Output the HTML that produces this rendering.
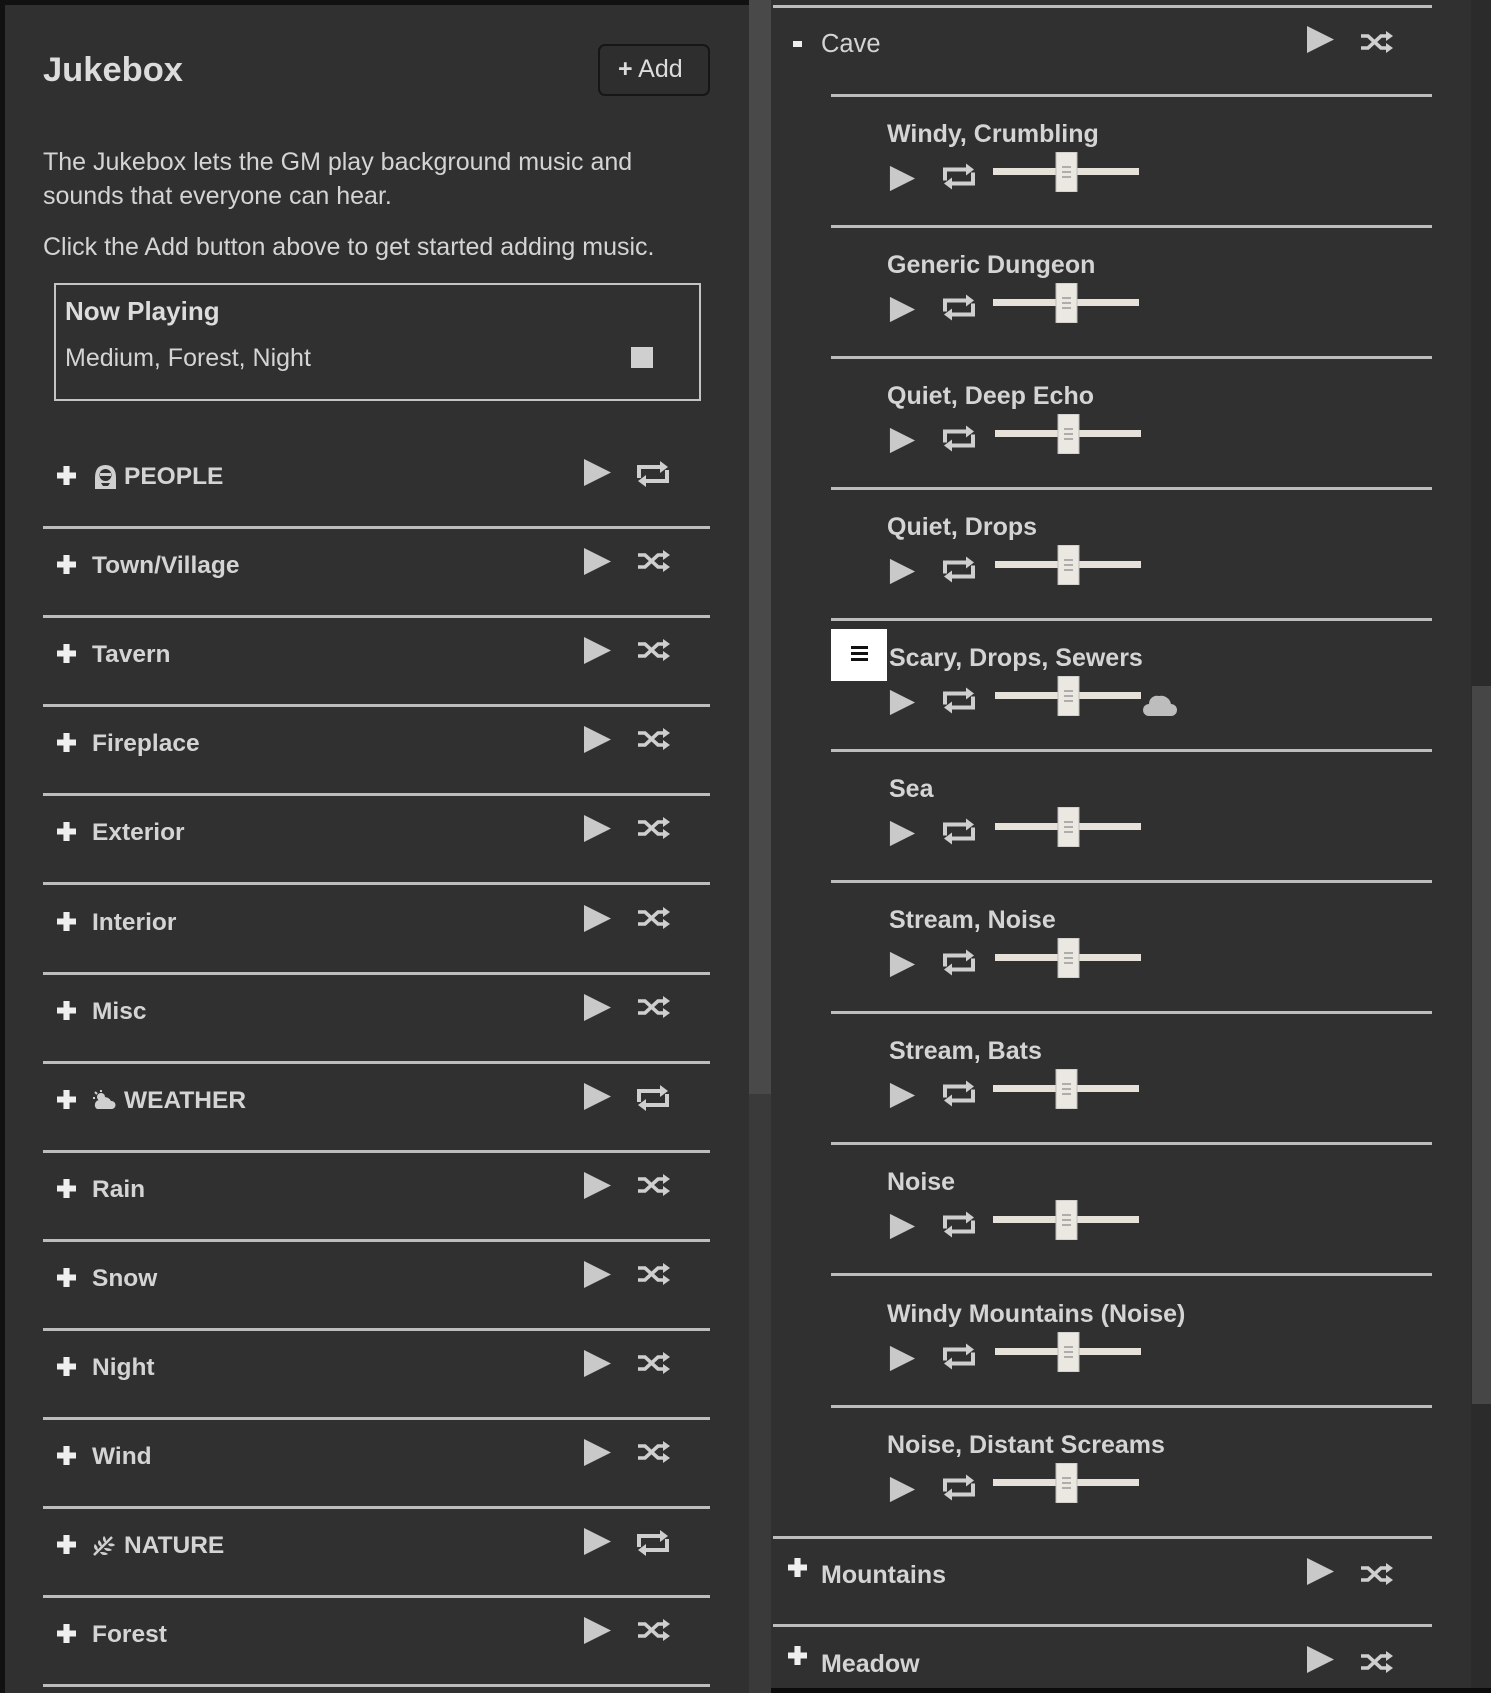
<!DOCTYPE html>
<html><head><meta charset="utf-8">
<style>
*{margin:0;padding:0;box-sizing:border-box}
body{width:1491px;height:1693px;background:#111;position:relative;overflow:hidden;font-family:"Liberation Sans",Arial,sans-serif;color:#d4d4d4}
.a{position:absolute}
.lp{left:5px;top:5px;width:744px;height:1688px;background:#303030}
.ls{left:749px;top:0;width:22px;height:1693px;background:#3a3a3a}
.lt{left:749px;top:0;width:22px;height:1094px;background:#494949}
.rp{left:771px;top:0;width:700px;height:1688px;background:#303030}
.rs{left:1471px;top:0;width:20px;height:1693px;background:#2b2b2b}
.rt{left:1472px;top:686px;width:19px;height:718px;background:#464646}
.sep{height:3px;background:#bdbdbd}
.lab{font-size:24.5px;font-weight:bold;line-height:30px;white-space:nowrap}
.rl{font-size:25px}
svg.i{position:absolute;overflow:visible}
.L{position:absolute;left:0}
</style></head><body>
<svg width="0" height="0" style="position:absolute">
<defs>
<symbol id="pl" viewBox="0 0 29 27"><polygon points="1,0 28,13.5 1,27" fill="#c9c9c9"/></symbol>
<symbol id="sh" viewBox="0 0 34 22"><g fill="none" stroke="#cfcfcf" stroke-width="3.6"><path d="M1 5h7l13 12h6"/><path d="M1 17h7l13-12h6"/></g><polygon points="26,0 33,5 26,10" fill="#cfcfcf"/><polygon points="26,12 33,17 26,22" fill="#cfcfcf"/></symbol>
<symbol id="rp" viewBox="0 0 36 30"><g fill="none" stroke="#cfcfcf" stroke-width="4"><path d="M4 19V8h22"/><path d="M32 11v11H10"/></g><polygon points="25,2 33,8 25,14" fill="#cfcfcf"/><polygon points="11,16 3,22 11,28" fill="#cfcfcf"/></symbol>
<symbol id="pz" viewBox="0 0 14 14"><path d="M7 0v14M0 7h14" stroke="#efefef" stroke-width="4.5"/></symbol>
<symbol id="sl" viewBox="0 0 146 40"><rect x="0" y="16" width="146" height="7" fill="#e6e2da"/><rect x="63" y="0" width="21" height="40" fill="#ebe8e2" stroke="#bbb" stroke-width="1"/><path d="M69 15h9M69 20h9M69 25h9" stroke="#999" stroke-width="1.5"/></symbol>
</defs></svg>

<div class="a lp"></div>
<div class="a ls"></div><div class="a lt"></div>
<div class="a rp"></div>
<div class="a rs"></div><div class="a rt"></div>

<div class="a" style="left:43px;top:51px;font-size:34.5px;font-weight:bold;color:#dcdcdc">Jukebox</div>
<div class="a" style="left:598px;top:44px;width:112px;height:52px;border:2px solid #161616;border-radius:7px;background:#2e2e2e;font-size:25px;line-height:46px;color:#dcdcdc;padding-left:18px"><span style="font-weight:bold">+</span> Add</div>
<div class="a" style="left:43px;top:145px;font-size:25px;line-height:34px;width:690px">The Jukebox lets the GM play background music and<br>sounds that everyone can hear.</div>
<div class="a" style="left:43px;top:232px;font-size:25px;line-height:30px">Click the Add button above to get started adding music.</div>
<div class="a" style="left:54px;top:283px;width:647px;height:118px;border:2px solid #c4c4c4"></div>
<div class="a" style="left:65px;top:296px;font-size:26px;font-weight:bold;color:#dcdcdc">Now Playing</div>
<div class="a" style="left:65px;top:344px;font-size:25px">Medium, Forest, Night</div>
<div class="a" style="left:631px;top:347px;width:22px;height:21px;background:#cfcfcf"></div>

<div class="L" style="top:2px">
<svg class="i" style="left:57px;top:464px" width="19" height="19"><use href="#pz"/></svg>
<svg class="i" style="left:92px;top:461px" width="27" height="26" viewBox="0 0 27 26"><path d="M3 26V15Q3 2 13.5 2T24 15v11z" fill="#cfcfcf"/><circle cx="13.5" cy="12" r="6" fill="#303030"/><rect x="8" y="10" width="11" height="3" fill="#cfcfcf"/><path d="M9 20h9l-2 3h-5z" fill="#303030"/></svg>
<div class="a lab" style="left:124px;top:460px">PEOPLE</div>
<svg class="i" style="left:583px;top:457px" width="29" height="27"><use href="#pl"/></svg>
<svg class="i" style="left:635px;top:457px" width="36" height="30"><use href="#rp"/></svg>
<div class="a sep" style="left:43px;top:524px;width:667px"></div>
</div>
<div class="L" style="top:91px">
<svg class="i" style="left:57px;top:464px" width="19" height="19"><use href="#pz"/></svg>
<div class="a lab" style="left:92px;top:460px">Town/Village</div>
<svg class="i" style="left:583px;top:457px" width="29" height="27"><use href="#pl"/></svg>
<svg class="i" style="left:637px;top:459px" width="34" height="22"><use href="#sh"/></svg>
<div class="a sep" style="left:43px;top:524px;width:667px"></div>
</div>
<div class="L" style="top:180px">
<svg class="i" style="left:57px;top:464px" width="19" height="19"><use href="#pz"/></svg>
<div class="a lab" style="left:92px;top:460px">Tavern</div>
<svg class="i" style="left:583px;top:457px" width="29" height="27"><use href="#pl"/></svg>
<svg class="i" style="left:637px;top:459px" width="34" height="22"><use href="#sh"/></svg>
<div class="a sep" style="left:43px;top:524px;width:667px"></div>
</div>
<div class="L" style="top:269px">
<svg class="i" style="left:57px;top:464px" width="19" height="19"><use href="#pz"/></svg>
<div class="a lab" style="left:92px;top:460px">Fireplace</div>
<svg class="i" style="left:583px;top:457px" width="29" height="27"><use href="#pl"/></svg>
<svg class="i" style="left:637px;top:459px" width="34" height="22"><use href="#sh"/></svg>
<div class="a sep" style="left:43px;top:524px;width:667px"></div>
</div>
<div class="L" style="top:358px">
<svg class="i" style="left:57px;top:464px" width="19" height="19"><use href="#pz"/></svg>
<div class="a lab" style="left:92px;top:460px">Exterior</div>
<svg class="i" style="left:583px;top:457px" width="29" height="27"><use href="#pl"/></svg>
<svg class="i" style="left:637px;top:459px" width="34" height="22"><use href="#sh"/></svg>
<div class="a sep" style="left:43px;top:524px;width:667px"></div>
</div>
<div class="L" style="top:448px">
<svg class="i" style="left:57px;top:464px" width="19" height="19"><use href="#pz"/></svg>
<div class="a lab" style="left:92px;top:460px">Interior</div>
<svg class="i" style="left:583px;top:457px" width="29" height="27"><use href="#pl"/></svg>
<svg class="i" style="left:637px;top:459px" width="34" height="22"><use href="#sh"/></svg>
<div class="a sep" style="left:43px;top:524px;width:667px"></div>
</div>
<div class="L" style="top:537px">
<svg class="i" style="left:57px;top:464px" width="19" height="19"><use href="#pz"/></svg>
<div class="a lab" style="left:92px;top:460px">Misc</div>
<svg class="i" style="left:583px;top:457px" width="29" height="27"><use href="#pl"/></svg>
<svg class="i" style="left:637px;top:459px" width="34" height="22"><use href="#sh"/></svg>
<div class="a sep" style="left:43px;top:524px;width:667px"></div>
</div>
<div class="L" style="top:626px">
<svg class="i" style="left:57px;top:464px" width="19" height="19"><use href="#pz"/></svg>
<svg class="i" style="left:92px;top:464px" width="26" height="20" viewBox="0 0 26 20"><circle cx="9" cy="7" r="4" fill="#cfcfcf"/><path d="M9 0v2M3 2l2 2M1 8h2" stroke="#cfcfcf" stroke-width="2"/><path d="M5 19a5 5 0 0 1 2-9a7 7 0 0 1 12 1a4 4 0 0 1 1 8z" fill="#cfcfcf"/></svg>
<div class="a lab" style="left:124px;top:460px">WEATHER</div>
<svg class="i" style="left:583px;top:457px" width="29" height="27"><use href="#pl"/></svg>
<svg class="i" style="left:635px;top:457px" width="36" height="30"><use href="#rp"/></svg>
<div class="a sep" style="left:43px;top:524px;width:667px"></div>
</div>
<div class="L" style="top:715px">
<svg class="i" style="left:57px;top:464px" width="19" height="19"><use href="#pz"/></svg>
<div class="a lab" style="left:92px;top:460px">Rain</div>
<svg class="i" style="left:583px;top:457px" width="29" height="27"><use href="#pl"/></svg>
<svg class="i" style="left:637px;top:459px" width="34" height="22"><use href="#sh"/></svg>
<div class="a sep" style="left:43px;top:524px;width:667px"></div>
</div>
<div class="L" style="top:804px">
<svg class="i" style="left:57px;top:464px" width="19" height="19"><use href="#pz"/></svg>
<div class="a lab" style="left:92px;top:460px">Snow</div>
<svg class="i" style="left:583px;top:457px" width="29" height="27"><use href="#pl"/></svg>
<svg class="i" style="left:637px;top:459px" width="34" height="22"><use href="#sh"/></svg>
<div class="a sep" style="left:43px;top:524px;width:667px"></div>
</div>
<div class="L" style="top:893px">
<svg class="i" style="left:57px;top:464px" width="19" height="19"><use href="#pz"/></svg>
<div class="a lab" style="left:92px;top:460px">Night</div>
<svg class="i" style="left:583px;top:457px" width="29" height="27"><use href="#pl"/></svg>
<svg class="i" style="left:637px;top:459px" width="34" height="22"><use href="#sh"/></svg>
<div class="a sep" style="left:43px;top:524px;width:667px"></div>
</div>
<div class="L" style="top:982px">
<svg class="i" style="left:57px;top:464px" width="19" height="19"><use href="#pz"/></svg>
<div class="a lab" style="left:92px;top:460px">Wind</div>
<svg class="i" style="left:583px;top:457px" width="29" height="27"><use href="#pl"/></svg>
<svg class="i" style="left:637px;top:459px" width="34" height="22"><use href="#sh"/></svg>
<div class="a sep" style="left:43px;top:524px;width:667px"></div>
</div>
<div class="L" style="top:1071px">
<svg class="i" style="left:57px;top:464px" width="19" height="19"><use href="#pz"/></svg>
<svg class="i" style="left:92px;top:463px" width="24" height="22" viewBox="0 0 24 22"><path d="M2 21L20 3" stroke="#cfcfcf" stroke-width="2.5"/><path d="M6 17c-4-1-5-5-3-7 2 2 3 4 3 7zM10 13c-4-1-5-5-3-7 2 2 3 4 3 7zM14 9c-3-1-4-5-2-7 2 2 2 4 2 7zM8 18c1 3 5 4 8 2-2-2-5-2-8-2zM12 14c1 3 5 4 8 2-2-2-5-2-8-2zM16 10c1 3 5 3 7 1-2-2-4-2-7-1z" fill="#cfcfcf"/></svg>
<div class="a lab" style="left:124px;top:460px">NATURE</div>
<svg class="i" style="left:583px;top:457px" width="29" height="27"><use href="#pl"/></svg>
<svg class="i" style="left:635px;top:457px" width="36" height="30"><use href="#rp"/></svg>
<div class="a sep" style="left:43px;top:524px;width:667px"></div>
</div>
<div class="L" style="top:1160px">
<svg class="i" style="left:57px;top:464px" width="19" height="19"><use href="#pz"/></svg>
<div class="a lab" style="left:92px;top:460px">Forest</div>
<svg class="i" style="left:583px;top:457px" width="29" height="27"><use href="#pl"/></svg>
<svg class="i" style="left:637px;top:459px" width="34" height="22"><use href="#sh"/></svg>
<div class="a sep" style="left:43px;top:524px;width:667px"></div>
</div>

<!-- right panel -->
<div class="a sep" style="left:773px;top:5px;width:659px"></div>
<div class="a" style="left:793px;top:41px;width:9px;height:6px;background:#eee"></div>
<div class="a lab" style="left:821px;top:29px;font-weight:normal;font-size:25.5px">Cave</div>
<svg class="i" style="left:1306px;top:26px" width="29" height="27"><use href="#pl"/></svg>
<svg class="i" style="left:1360px;top:31px" width="34" height="22"><use href="#sh"/></svg>
<div class="a sep" style="left:831px;top:94px;width:601px"></div>

<div class="L" style="top:0">
<div class="a lab rl" style="left:887px;top:119px">Windy, Crumbling</div>
<svg class="i" style="left:889px;top:165px" width="27" height="27"><use href="#pl"/></svg>
<svg class="i" style="left:941px;top:161px" width="36" height="31"><use href="#rp"/></svg>
<svg class="i" style="left:993px;top:152px" width="146" height="40"><use href="#sl"/></svg>
<div class="a sep" style="left:831px;top:225px;width:601px"></div>
</div>
<div class="L" style="top:131px">
<div class="a lab rl" style="left:887px;top:119px">Generic Dungeon</div>
<svg class="i" style="left:889px;top:165px" width="27" height="27"><use href="#pl"/></svg>
<svg class="i" style="left:941px;top:161px" width="36" height="31"><use href="#rp"/></svg>
<svg class="i" style="left:993px;top:152px" width="146" height="40"><use href="#sl"/></svg>
<div class="a sep" style="left:831px;top:225px;width:601px"></div>
</div>
<div class="L" style="top:262px">
<div class="a lab rl" style="left:887px;top:119px">Quiet, Deep Echo</div>
<svg class="i" style="left:889px;top:165px" width="27" height="27"><use href="#pl"/></svg>
<svg class="i" style="left:941px;top:161px" width="36" height="31"><use href="#rp"/></svg>
<svg class="i" style="left:995px;top:152px" width="146" height="40"><use href="#sl"/></svg>
<div class="a sep" style="left:831px;top:225px;width:601px"></div>
</div>
<div class="L" style="top:393px">
<div class="a lab rl" style="left:887px;top:119px">Quiet, Drops</div>
<svg class="i" style="left:889px;top:165px" width="27" height="27"><use href="#pl"/></svg>
<svg class="i" style="left:941px;top:161px" width="36" height="31"><use href="#rp"/></svg>
<svg class="i" style="left:995px;top:152px" width="146" height="40"><use href="#sl"/></svg>
<div class="a sep" style="left:831px;top:225px;width:601px"></div>
</div>
<div class="L" style="top:524px">
<div class="a" style="left:831px;top:105px;width:56px;height:52px;background:#fff"></div>
<div class="a" style="left:851px;top:122px;width:17px;height:3px;background:#111;box-shadow:0 6px 0 #111,0 12px 0 #111"></div>
<div class="a lab rl" style="left:889px;top:119px">Scary, Drops, Sewers</div>
<svg class="i" style="left:889px;top:165px" width="27" height="27"><use href="#pl"/></svg>
<svg class="i" style="left:941px;top:161px" width="36" height="31"><use href="#rp"/></svg>
<svg class="i" style="left:995px;top:152px" width="146" height="40"><use href="#sl"/></svg>
<svg class="i" style="left:1143px;top:168px" width="34" height="24" viewBox="0 0 34 24"><path d="M6 24a6 6 0 0 1 0-12a8 8 0 0 1 10-8a10 10 0 0 1 12 8a6 6 0 0 1 0 12z" fill="#bdbdbd"/></svg>
<div class="a sep" style="left:831px;top:225px;width:601px"></div>
</div>
<div class="L" style="top:655px">
<div class="a lab rl" style="left:889px;top:119px">Sea</div>
<svg class="i" style="left:889px;top:165px" width="27" height="27"><use href="#pl"/></svg>
<svg class="i" style="left:941px;top:161px" width="36" height="31"><use href="#rp"/></svg>
<svg class="i" style="left:995px;top:152px" width="146" height="40"><use href="#sl"/></svg>
<div class="a sep" style="left:831px;top:225px;width:601px"></div>
</div>
<div class="L" style="top:786px">
<div class="a lab rl" style="left:889px;top:119px">Stream, Noise</div>
<svg class="i" style="left:889px;top:165px" width="27" height="27"><use href="#pl"/></svg>
<svg class="i" style="left:941px;top:161px" width="36" height="31"><use href="#rp"/></svg>
<svg class="i" style="left:995px;top:152px" width="146" height="40"><use href="#sl"/></svg>
<div class="a sep" style="left:831px;top:225px;width:601px"></div>
</div>
<div class="L" style="top:917px">
<div class="a lab rl" style="left:889px;top:119px">Stream, Bats</div>
<svg class="i" style="left:889px;top:165px" width="27" height="27"><use href="#pl"/></svg>
<svg class="i" style="left:941px;top:161px" width="36" height="31"><use href="#rp"/></svg>
<svg class="i" style="left:993px;top:152px" width="146" height="40"><use href="#sl"/></svg>
<div class="a sep" style="left:831px;top:225px;width:601px"></div>
</div>
<div class="L" style="top:1048px">
<div class="a lab rl" style="left:887px;top:119px">Noise</div>
<svg class="i" style="left:889px;top:165px" width="27" height="27"><use href="#pl"/></svg>
<svg class="i" style="left:941px;top:161px" width="36" height="31"><use href="#rp"/></svg>
<svg class="i" style="left:993px;top:152px" width="146" height="40"><use href="#sl"/></svg>
<div class="a sep" style="left:831px;top:225px;width:601px"></div>
</div>
<div class="L" style="top:1180px">
<div class="a lab rl" style="left:887px;top:119px">Windy Mountains (Noise)</div>
<svg class="i" style="left:889px;top:165px" width="27" height="27"><use href="#pl"/></svg>
<svg class="i" style="left:941px;top:161px" width="36" height="31"><use href="#rp"/></svg>
<svg class="i" style="left:995px;top:152px" width="146" height="40"><use href="#sl"/></svg>
<div class="a sep" style="left:831px;top:225px;width:601px"></div>
</div>
<div class="L" style="top:1311px">
<div class="a lab rl" style="left:887px;top:119px">Noise, Distant Screams</div>
<svg class="i" style="left:889px;top:165px" width="27" height="27"><use href="#pl"/></svg>
<svg class="i" style="left:941px;top:161px" width="36" height="31"><use href="#rp"/></svg>
<svg class="i" style="left:993px;top:152px" width="146" height="40"><use href="#sl"/></svg>
<div class="a sep" style="left:773px;top:225px;width:659px"></div>
</div>

<svg class="i" style="left:788px;top:1558px" width="19" height="19"><use href="#pz"/></svg>
<div class="a lab rl" style="left:821px;top:1560px">Mountains</div>
<svg class="i" style="left:1306px;top:1558px" width="29" height="27"><use href="#pl"/></svg>
<svg class="i" style="left:1360px;top:1563px" width="34" height="22"><use href="#sh"/></svg>
<div class="a sep" style="left:773px;top:1624px;width:659px"></div>
<svg class="i" style="left:788px;top:1646px" width="19" height="19"><use href="#pz"/></svg>
<div class="a lab rl" style="left:821px;top:1649px">Meadow</div>
<svg class="i" style="left:1306px;top:1646px" width="29" height="27"><use href="#pl"/></svg>
<svg class="i" style="left:1360px;top:1651px" width="34" height="22"><use href="#sh"/></svg>
<div class="a" style="left:771px;top:1688px;width:720px;height:5px;background:#0c0c0c"></div>
</body></html>
